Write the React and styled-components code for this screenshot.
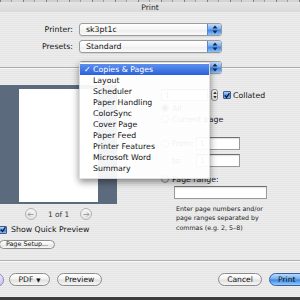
import React from 'react';
import styled, { createGlobalStyle } from 'styled-components';

const Global = createGlobalStyle`
  html, body { margin: 0; padding: 0; width: 300px; height: 300px; overflow: hidden; }
  body { font-family: "DejaVu Sans", "Liberation Sans", sans-serif; }
  * { box-sizing: border-box; }
`;

const Window = styled.div`
  position: relative;
  width: 300px;
  height: 300px;
  overflow: hidden;
  display: flex;
  flex-direction: column;
  background: repeating-linear-gradient(180deg, #ededed 0 1px, #e5e5e5 1px 2px);
  color: #151515;
  font-size: 7.8px;
`;

const TopStrip = styled.div`
  height: 2px;
  flex: none;
  background: repeating-linear-gradient(90deg, #7d7d7d 0 1px, #cfcfcf 1px 11px, #9a9a9a 11px 12px, #d4d4d4 12px 23px);
`;

const TitleBar = styled.div`
  height: 10px;
  flex: none;
  display: flex;
  align-items: center;
  justify-content: center;
  background: linear-gradient(#e4e4e4, #dadada);
  font-size: 7.6px;
  color: #222;
`;

const Header = styled.div`
  display: grid;
  grid-template-columns: 73px 143px;
  grid-auto-rows: 13px;
  column-gap: 6px;
  row-gap: 4px;
  padding-top: 11px;
  flex: none;
`;

const Label = styled.div`
  text-align: right;
  line-height: 13px;
  white-space: nowrap;
`;

const Popup = styled.div`
  height: 13px;
  display: flex;
  border: 1px solid #9b9b9b;
  border-radius: 3px;
  background: linear-gradient(#ffffff, #f6f6f6 50%, #ececec 51%, #fbfbfb);
  overflow: hidden;
  box-shadow: 0 1px 1px rgba(0,0,0,0.08);
`;

const PopupValue = styled.div`
  flex: 1;
  padding-left: 6px;
  line-height: 11px;
  white-space: nowrap;
`;

const PopupArrows = styled.div`
  width: 14px;
  flex: none;
  display: flex;
  align-items: center;
  justify-content: center;
  border-left: 1px solid #5a86c8;
  background: linear-gradient(#c4dcf8, #79aef0 45%, #3f86e6 55%, #8cc2fa);
`;

const Arrows = () => (
  <svg width="6" height="9" viewBox="0 0 6 9">
    <path d="M3 0.5 L5.5 3.5 H0.5 Z" fill="#12264a" />
    <path d="M3 8.5 L5.5 5.5 H0.5 Z" fill="#12264a" />
  </svg>
);

const PanelDivider = styled.div`
  flex: none;
  margin-top: 8px;
  height: 13px;
  padding-left: 79px;
  background: linear-gradient(transparent 6px, #a9a9a9 6px 7px, #f9f9f9 7px 8px, transparent 8px);
`;

const PanelPopup = styled(Popup)`
  width: 143px;
`;

const Body = styled.div`
  flex: 1;
  display: flex;
  min-height: 0;
`;

const LeftCol = styled.div`
  width: 117px;
  flex: none;
  display: flex;
  flex-direction: column;
`;

const PreviewPanel = styled.div`
  margin-top: 11px;
  height: 119px;
  background: #5c6a7d;
  display: flex;
  justify-content: center;
  padding-top: 4px;
`;

const Page = styled.div`
  width: 79px;
  height: 113px;
  background: #ffffff;
`;

const Pager = styled.div`
  margin-top: 4px;
  height: 12px;
  display: flex;
  align-items: center;
  justify-content: center;
  gap: 11px;
  color: #333;
  font-size: 7.4px;
`;

const RoundArrow = styled.div`
  width: 12px;
  height: 12px;
  border-radius: 50%;
  border: 1px solid #b3b3b3;
  background: linear-gradient(#f6f6f6, #e3e3e3);
  display: flex;
  align-items: center;
  justify-content: center;
`;

const ArrowIcon = ({ dir }) => (
  <svg width="7" height="5" viewBox="0 0 7 5">
    {dir === 'left' ? (
      <path d="M6.5 2.5 H1 M3 0.5 L1 2.5 L3 4.5" stroke="#a0a0a0" strokeWidth="1" fill="none" />
    ) : (
      <path d="M0.5 2.5 H6 M4 0.5 L6 2.5 L4 4.5" stroke="#a0a0a0" strokeWidth="1" fill="none" />
    )}
  </svg>
);

const CheckRow = styled.div`
  margin-top: ${p => p.$mt || 0}px;
  margin-left: ${p => p.$ml || 0}px;
  height: ${p => p.$h || 9}px;
  display: flex;
  align-items: center;
  gap: ${p => p.$gap || 4}px;
  white-space: nowrap;
`;

const CheckBox = styled.div`
  width: 8px;
  height: 8px;
  flex: none;
  border: 1px solid #3e5f96;
  border-radius: 1px;
  background: linear-gradient(#b7d4f8, #5b93e2 50%, #3b78d6 51%, #8dbdf4);
  display: flex;
  align-items: center;
  justify-content: center;
`;

const Check = () => (
  <svg width="7" height="7" viewBox="0 0 7 7">
    <path d="M1 3.5 L3 5.8 L6.3 0.8" stroke="#0d1a33" strokeWidth="1.4" fill="none" />
  </svg>
);

const SmallButton = styled.div`
  margin-top: 6px;
  margin-left: -1px;
  width: 56px;
  height: 9px;
  border: 1px solid #8e8e8e;
  border-radius: 5px;
  background: linear-gradient(#ffffff, #f0f0f0 50%, #e2e2e2 51%, #f7f7f7);
  font-size: 6.4px;
  line-height: 7px;
  text-align: center;
  white-space: nowrap;
`;

const RightCol = styled.div`
  flex: 1;
  display: flex;
  flex-direction: column;
`;

const Row = styled.div`
  margin-top: ${p => p.$mt}px;
  height: ${p => p.$h}px;
  display: flex;
  align-items: center;
  white-space: nowrap;
`;

const RowLabel = styled.div`
  width: 40px;
  margin-right: 4px;
  text-align: right;
  flex: none;
`;

const Field = styled.div`
  width: ${p => p.$w}px;
  height: ${p => p.$fh || 13}px;
  margin-left: ${p => p.$ml || 0}px;
  flex: none;
  background: #ffffff;
  border: 1px solid #9a9a9a;
  border-top-color: #6f6f6f;
  box-shadow: inset 0 1px 1px rgba(0,0,0,0.12);
  font-size: 7.4px;
  line-height: 11px;
  padding-left: 3px;
`;

const Stepper = styled.div`
  width: 7px;
  height: 12px;
  margin-left: 3px;
  flex: none;
  border: 1px solid #8f8f8f;
  border-radius: 3px;
  background: linear-gradient(#fdfdfd, #e4e4e4);
  display: flex;
  align-items: center;
  justify-content: center;
`;

const StepArrows = () => (
  <svg width="4" height="8" viewBox="0 0 4 8">
    <path d="M2 0.5 L3.8 3 H0.2 Z" fill="#333" />
    <path d="M2 7.5 L3.8 5 H0.2 Z" fill="#333" />
  </svg>
);

const Radio = styled.div`
  width: 8px;
  height: 8px;
  flex: none;
  border-radius: 50%;
  border: 1px solid #8a8a8a;
  background: ${p => p.$on
    ? 'radial-gradient(circle, #1b2f57 0 1.5px, #5d95e4 2px, #9cc5f6)'
    : 'linear-gradient(#ffffff, #d9d9d9)'};
`;

const RadioText = styled.span`
  margin-left: 3px;
  width: ${p => (p.$w ? `${p.$w}px` : 'auto')};
  flex: none;
`;

const Spacer = styled.div`
  width: ${p => p.$w}px;
  flex: none;
`;

const HelpText = styled.div`
  margin-top: 5px;
  margin-left: 59px;
  font-size: 6.3px;
  line-height: 9.4px;
  color: #1a1a1a;
`;

const Footer = styled.div`
  flex: none;
  height: 40px;
  display: flex;
  flex-direction: column;
  border-top: 1px solid #b2b2b2;
  box-shadow: inset 0 1px 0 #f7f7f7;
`;

const ButtonRow = styled.div`
  margin-top: 12px;
  height: 13px;
  display: flex;
  align-items: center;
`;

const HelpButton = styled.div`
  width: 14px;
  height: 14px;
  margin-left: -10px;
  flex: none;
  border-radius: 50%;
  border: 1px solid #8f86c2;
  background: linear-gradient(#ece8fb, #c9c0ef);
`;

const PillButton = styled.div`
  width: ${p => p.$w}px;
  margin-left: ${p => p.$ml || 0}px;
  margin-right: ${p => p.$mr || 0}px;
  height: 13px;
  flex: none;
  border-radius: 7px;
  border: 1px solid ${p => (p.$default ? '#3b5f9c' : '#8c8c8c')};
  background: ${p => p.$default
    ? 'linear-gradient(#b9dafb, #6fabef 48%, #3b84e3 52%, #93ccfb)'
    : 'linear-gradient(#ffffff, #f1f1f1 48%, #e0e0e0 52%, #f6f6f6)'};
  display: flex;
  align-items: center;
  justify-content: ${p => (p.$start ? 'flex-start' : 'center')};
  padding-left: ${p => (p.$start ? 8 : 0)}px;
  gap: 3px;
  font-size: 7.6px;
  color: #111;
  white-space: nowrap;
`;

const Caret = styled.span`
  font-size: 5.5px;
`;

const Grow = styled.div`
  flex: 1;
`;

const BottomStrip = styled.div`
  margin-top: auto;
  height: 3px;
  background: #3c3c3c;
`;

const Menu = styled.div`
  position: absolute;
  left: 79px;
  top: 62px;
  width: 131px;
  padding: 1px 0 4px;
  background: rgba(255, 255, 255, 0.93);
  border: 1px solid rgba(0, 0, 0, 0.12);
  box-shadow: 0 3px 7px rgba(0, 0, 0, 0.45);
`;

const MenuItem = styled.div`
  position: relative;
  height: 11px;
  line-height: 11px;
  padding-left: 13px;
  font-size: 7.8px;
  white-space: nowrap;
  color: ${p => (p.$selected ? '#ffffff' : '#111')};
  background: ${p => (p.$selected ? 'linear-gradient(#5f90ef, #2a62da)' : 'transparent')};
`;

const CheckMark = styled.span`
  position: absolute;
  left: 4px;
  top: 0;
`;

const menuItems = [
  'Copies & Pages', 'Layout', 'Scheduler', 'Paper Handling', 'ColorSync',
  'Cover Page', 'Paper Feed', 'Printer Features', 'Microsoft Word', 'Summary',
];

export default function App() {
  return (
    <Window>
      <Global />
      <TopStrip />
      <TitleBar>Print</TitleBar>
      <Header>
        <Label>Printer:</Label>
        <Popup>
          <PopupValue>sk3pt1c</PopupValue>
          <PopupArrows><Arrows /></PopupArrows>
        </Popup>
        <Label>Presets:</Label>
        <Popup>
          <PopupValue>Standard</PopupValue>
          <PopupArrows><Arrows /></PopupArrows>
        </Popup>
      </Header>
      <PanelDivider>
        <PanelPopup>
          <PopupValue />
          <PopupArrows><Arrows /></PopupArrows>
        </PanelPopup>
      </PanelDivider>
      <Body>
        <LeftCol>
          <PreviewPanel><Page /></PreviewPanel>
          <Pager>
            <RoundArrow><ArrowIcon dir="left" /></RoundArrow>
            <span>1 of 1</span>
            <RoundArrow><ArrowIcon dir="right" /></RoundArrow>
          </Pager>
          <CheckRow $mt={5} $ml={-1} $h={9}>
            <CheckBox><Check /></CheckBox>
            <span>Show Quick Preview</span>
          </CheckRow>
          <SmallButton>Page Setup...</SmallButton>
        </LeftCol>
        <RightCol>
          <Row $mt={15} $h={12}>
            <RowLabel />
            <Field $w={47} $fh={12}>1</Field>
            <Stepper><StepArrows /></Stepper>
            <CheckRow $ml={5} $gap={2} $h={12}>
              <CheckBox><Check /></CheckBox>
              <span>Collated</span>
            </CheckRow>
          </Row>
          <Row $mt={2} $h={10}>
            <RowLabel />
            <Radio $on />
            <RadioText>All</RadioText>
          </Row>
          <Row $mt={1} $h={10}>
            <RowLabel />
            <Radio />
            <RadioText>Current page</RadioText>
          </Row>
          <Row $mt={13} $h={13}>
            <RowLabel />
            <Radio />
            <RadioText $w={22}>From:</RadioText>
            <Field $w={44} $ml={2}>1</Field>
          </Row>
          <Row $mt={4} $h={13}>
            <RowLabel />
            <Spacer $w={8} />
            <RadioText $w={22}>to:</RadioText>
            <Field $w={44} $ml={2}>1</Field>
          </Row>
          <Row $mt={7} $h={10}>
            <RowLabel />
            <Radio />
            <RadioText>Page range:</RadioText>
          </Row>
          <Row $mt={2} $h={13}>
            <Field $w={93} $ml={57} />
          </Row>
          <HelpText>
            Enter page numbers and/or<br />
            page ranges separated by<br />
            commas (e.g. 2, 5–8)
          </HelpText>
        </RightCol>
      </Body>
      <Footer>
        <ButtonRow>
          <HelpButton />
          <PillButton $w={41} $ml={5}>PDF <Caret>▼</Caret></PillButton>
          <PillButton $w={45} $ml={7}>Preview</PillButton>
          <Grow />
          <PillButton $w={44}>Cancel</PillButton>
          <PillButton $w={40} $ml={7} $mr={-9} $default $start>Print</PillButton>
        </ButtonRow>
        <BottomStrip />
      </Footer>
      <Menu>
        {menuItems.map((item, i) => (
          <MenuItem key={item} $selected={i === 0}>
            {i === 0 && <CheckMark>✓</CheckMark>}
            {item}
          </MenuItem>
        ))}
      </Menu>
    </Window>
  );
}
